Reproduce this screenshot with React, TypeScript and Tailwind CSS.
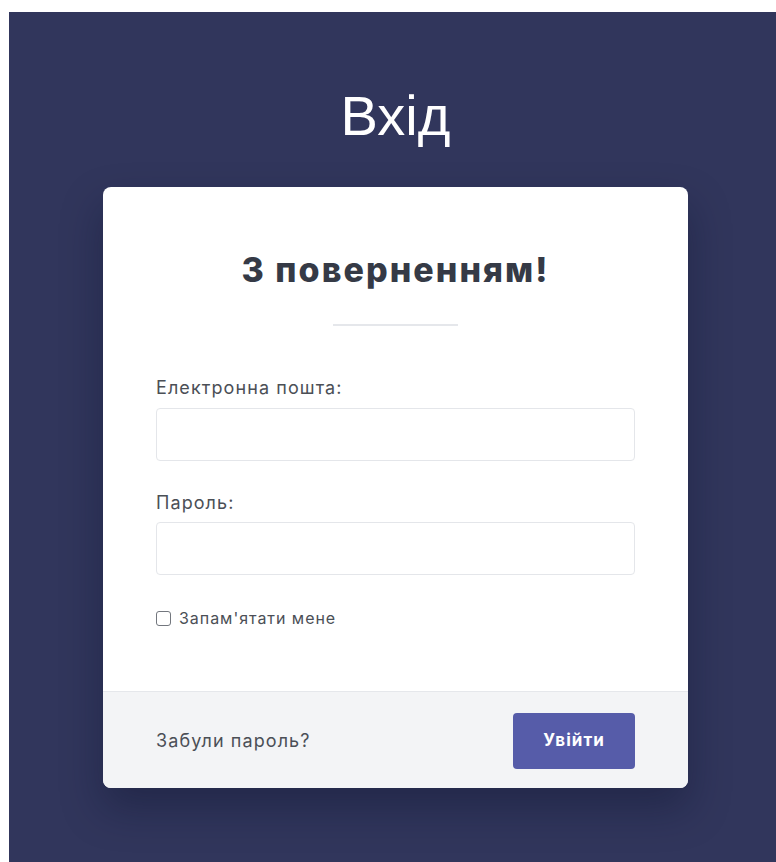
import { useState } from 'react';

export default function App() {
  const [email, setEmail] = useState('');
  const [password, setPassword] = useState('');
  const [remember, setRemember] = useState(false);

  return (
    <div className="min-h-screen bg-white pl-[9px] pt-[12px] font-['Inter',sans-serif]">
      <div className="h-[850px] bg-[#31365c] pl-[6px] flex flex-col items-center">
        {/* Page title */}
        <h1 className="mt-[76px] text-[56px] leading-[56px] text-white font-normal font-['Liberation_Sans',sans-serif]">
          Вхід
        </h1>

        {/* Login card */}
        <div className="mt-[43px] w-[585px] rounded-lg bg-white overflow-hidden shadow-[0_20px_40px_rgba(10,14,40,0.35)]">
          <form className="px-[53px] pt-[64px] pb-[63px]" onSubmit={(e) => e.preventDefault()}>
            <h2 className="text-center text-[34px] leading-[38px] font-extrabold tracking-[0.06em] text-[#353a46]">
              З поверненням!
            </h2>
            <div className="mx-auto mt-[35px] h-[2px] w-[125px] bg-[#e5e7eb]" />

            <label className="block mt-[50px] text-[18px] leading-[24px] tracking-[0.06em] text-[#4b4f56]" htmlFor="email">
              Електронна пошта:
            </label>
            <input
              id="email"
              type="email"
              value={email}
              onChange={(e) => setEmail(e.target.value)}
              className="mt-[8px] block w-full h-[53px] rounded border border-[#e4e6ea] px-3 text-[16px] text-gray-700 outline-none"
            />

            <label className="block mt-[30px] text-[18px] leading-[24px] tracking-[0.06em] text-[#4b4f56]" htmlFor="password">
              Пароль:
            </label>
            <input
              id="password"
              type="password"
              value={password}
              onChange={(e) => setPassword(e.target.value)}
              className="mt-[7px] block w-full h-[53px] rounded border border-[#e4e6ea] px-3 text-[16px] text-gray-700 outline-none"
            />

            <label className="mt-[33px] flex items-center gap-[8px] h-[20px] text-[16px] tracking-[0.06em] text-[#4b4f56] cursor-pointer">
              <input
                type="checkbox"
                checked={remember}
                onChange={(e) => setRemember(e.target.checked)}
                className="appearance-none w-[15px] h-[15px] rounded-[3px] border border-[#73777e] bg-white checked:bg-[#565ca9]"
              />
              Запам'ятати мене
            </label>
          </form>

          {/* Footer */}
          <div className="h-[97px] border-t border-[#e5e7eb] bg-[#f3f4f6] px-[53px] flex items-center justify-between">
            <a href="#" className="text-[18px] tracking-[0.06em] text-[#4b4f56]">
              Забули пароль?
            </a>
            <button className="mt-[1px] w-[122px] h-[56px] rounded bg-[#565ca9] text-white text-[17px] font-bold tracking-[0.06em]">
              Увійти
            </button>
          </div>
        </div>
      </div>
    </div>
  );
}
